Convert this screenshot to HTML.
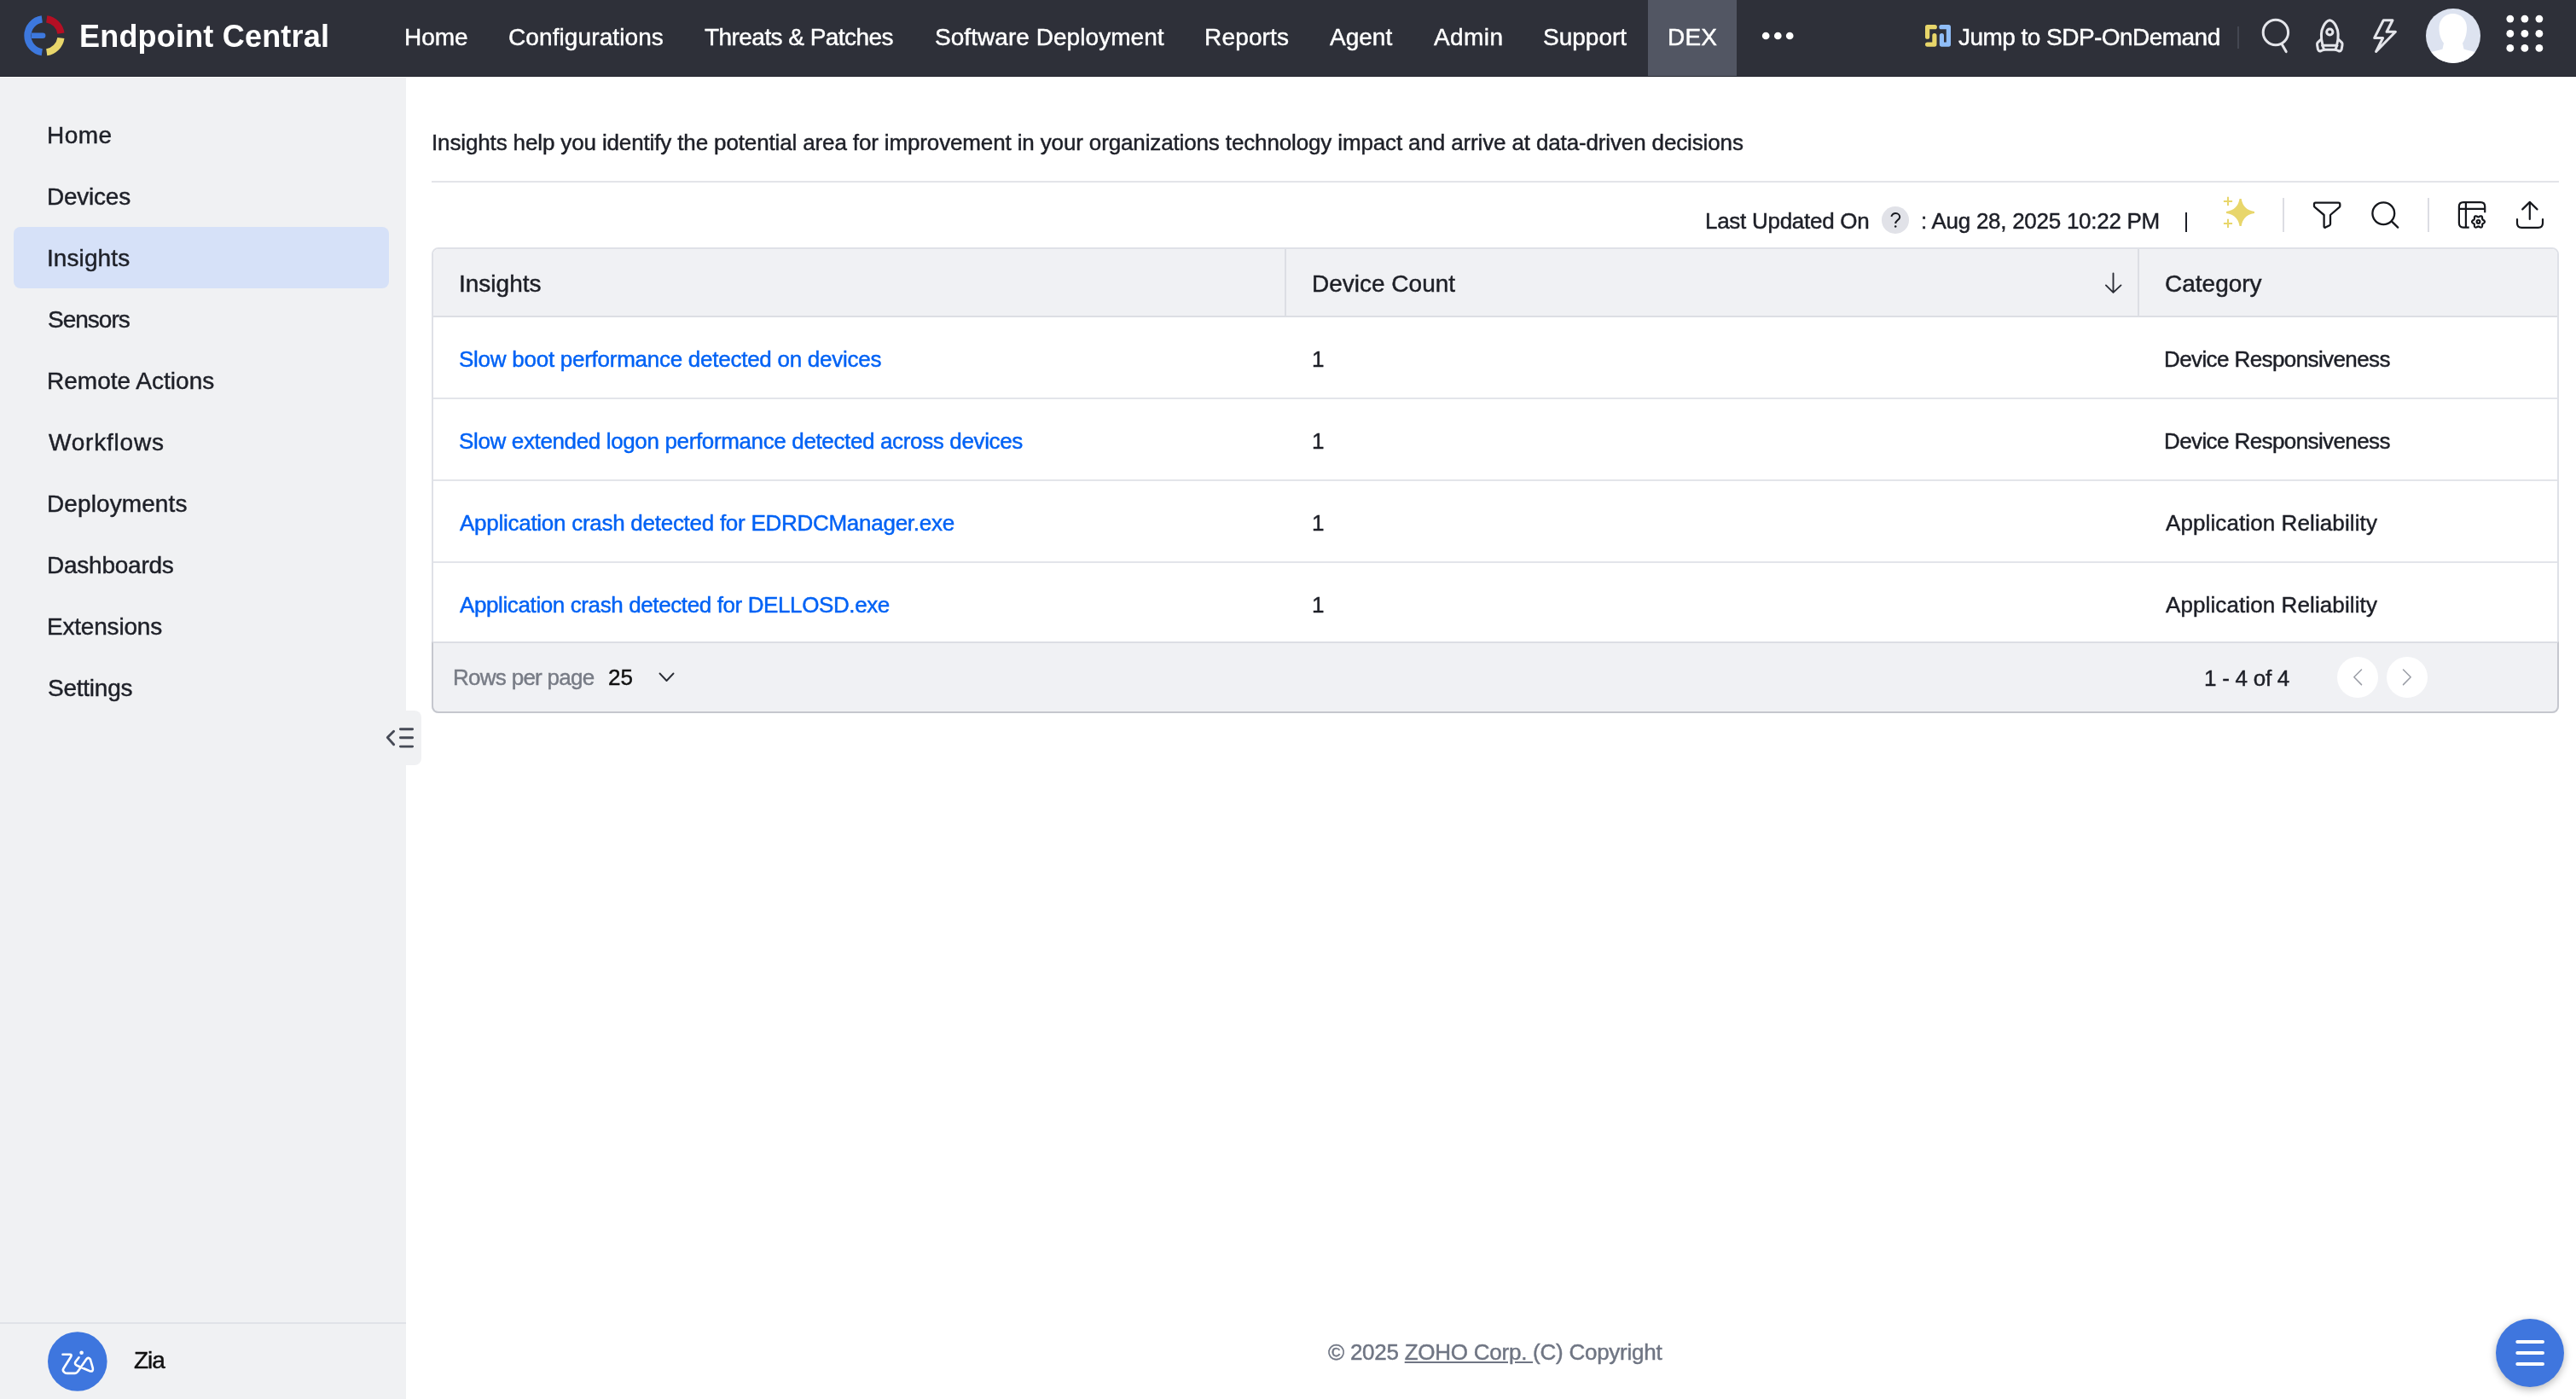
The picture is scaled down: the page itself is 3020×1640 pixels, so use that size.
<!DOCTYPE html>
<html><head><meta charset="utf-8">
<style>
*{box-sizing:border-box;margin:0;padding:0}
html,body{width:3020px;height:1640px;overflow:hidden;background:#fff;font-family:"Liberation Sans",sans-serif}
.a{position:absolute}
.t{position:absolute;white-space:nowrap;line-height:1;will-change:transform;-webkit-text-stroke:0.45px currentColor}
#hdr{left:0;top:0;width:3020px;height:89px;background:#2e3039;border-bottom:1px solid #24262f;box-sizing:content-box}
.nav{font-size:28px;color:#fff;top:30.2px}
#side{left:0;top:91px;width:476px;height:1549px;background:#f0f1f3}
.si{font-size:28px;color:#1e2028;left:54.3px}
.r26{font-size:26px;color:#1d1f27}
.lnk{font-size:26px;color:#0062f5}
</style></head><body>
<div id="hdr" class="a"></div>
<!-- logo -->
<svg class="a" style="left:0;top:0" width="100" height="90" viewBox="0 0 100 90">
  <g fill="none" stroke-width="8.2">
    <path d="M49.27 22.39 A19.6 19.6 0 0 0 49.27 61.21" stroke="#3d78de"/>
    <path d="M54.73 22.39 A19.6 19.6 0 0 1 71.41 39.07" stroke="#b50f24"/>
    <path d="M71.41 44.53 A19.6 19.6 0 0 1 54.73 61.21" stroke="#e8d66b"/>
  </g>
  <path d="M37 38.5 H50.1 A3.3 3.3 0 0 1 50.1 45.1 H37 Z" fill="#3d78de"/>
</svg>
<div class="t" style="left:93px;top:24.5px;font-size:36px;font-weight:bold;color:#fff;-webkit-text-stroke:0;letter-spacing:0.2px">Endpoint Central</div>
<div class="t nav" style="left:473.5px">Home</div>
<div class="t nav" style="left:596px;letter-spacing:0.1px">Configurations</div>
<div class="t nav" style="left:826px;letter-spacing:-0.55px">Threats &amp; Patches</div>
<div class="t nav" style="left:1095.5px;letter-spacing:0.05px">Software Deployment</div>
<div class="t nav" style="left:1412px;letter-spacing:0.17px">Reports</div>
<div class="t nav" style="left:1559px">Agent</div>
<div class="t nav" style="left:1681.2px;letter-spacing:0.4px">Admin</div>
<div class="t nav" style="left:1809px">Support</div>
<div class="a" style="left:1932px;top:0;width:104px;height:89px;background:#525663"></div>
<div class="t nav" style="left:1955px;letter-spacing:0.2px">DEX</div>
<svg class="a" style="left:2060px;top:32px" width="48" height="20" viewBox="2060 32 48 20"><circle cx="2070.2" cy="42" r="4.35" fill="#fff"/><circle cx="2084.3" cy="42" r="4.35" fill="#fff"/><circle cx="2098.2" cy="42" r="4.35" fill="#fff"/></svg>

<!-- right header -->
<svg class="a" style="left:2257px;top:29px" width="32" height="27" viewBox="0 0 32 27">
  <g fill="none" stroke-width="5.2" stroke-linecap="round" stroke-linejoin="round">
    <path d="M2.6 14.2 V2.7 H11.3" stroke="#e8d66a"/>
    <path d="M10.9 12.7 V23.1 H2.6" stroke="#e8d66a"/>
    <path d="M18.9 2.7 H27.4 V23.1 H19.4 V12.7" stroke="#8fbdf8"/>
  </g>
</svg>
<div class="t nav" style="left:2296px;letter-spacing:-0.54px">Jump to SDP-OnDemand</div>
<div class="a" style="left:2623px;top:31px;width:2px;height:26px;background:#444752"></div>
<svg class="a" style="left:2640px;top:10px" width="60" height="60" viewBox="2640 10 60 60">
  <g fill="none" stroke="#e4e5ea" stroke-width="3" stroke-linecap="round">
    <circle cx="2667.9" cy="38" r="14.7"/>
    <path d="M2675 51.5 L2680.2 60.6"/>
  </g>
</svg>
<svg class="a" style="left:2705px;top:15px" width="53" height="53" viewBox="0 0 53 53">
  <g fill="none" stroke="#e4e5ea" stroke-width="3" stroke-linecap="round" stroke-linejoin="round">
    <path d="M17.8 37 C16 30, 15.5 22, 19 15.5 C21 11.5, 24 9, 26.3 8.7 C28.6 9, 31.6 11.5, 33.6 15.5 C37 22, 36.6 30, 34.8 37"/>
    <path d="M17.8 38.3 H34.8"/>
    <path d="M19.7 43.2 H32.9"/>
    <path d="M15.6 31.6 L12.2 34.8 Q11.2 36 11.6 38 L12.5 43 Q13.5 45.5 16 44.7 L19.7 43.2 L17.8 38.3"/>
    <path d="M37 31.6 L40.4 34.8 Q41.4 36 41 38 L40.1 43 Q39.1 45.5 36.6 44.7 L32.9 43.2 L34.8 38.3"/>
    <circle cx="26.3" cy="22.5" r="3.6"/>
  </g>
</svg>
<svg class="a" style="left:2772px;top:15px" width="50" height="53" viewBox="0 0 50 53">
  <path d="M22.3 8.7 H33 L26.1 22.3 H36.4 L13.6 45.5 L21.6 29.5 H11.7 Z" fill="none" stroke="#e4e5ea" stroke-width="3" stroke-linejoin="round"/>
</svg>
<svg class="a" style="left:2844px;top:10px" width="64" height="64" viewBox="0 0 64 64">
  <defs><clipPath id="av"><circle cx="32" cy="32" r="32"/></clipPath></defs>
  <g clip-path="url(#av)">
    <rect width="64" height="64" fill="#dde3f0"/>
    <path d="M31.7 5.9 C40.5 5.9, 48 12.5, 48 22.5 C48 30, 46 36.5, 43 40.5 L44.5 47.5 Q52 50, 66 52.5 V66 H-2 V52.5 Q12 50, 19.5 47.5 L21 40.5 C17.5 36.5, 15.5 30, 15.5 22.5 C15.5 12.5, 23 5.9, 31.7 5.9 Z" fill="#fff"/>
  </g>
</svg>
<svg class="a" style="left:2930px;top:10px" width="60" height="60" viewBox="2930 10 60 60" fill="#fff">
  <circle cx="2942.8" cy="22.1" r="4.4"/><circle cx="2959.9" cy="22.1" r="4.4"/><circle cx="2976.9" cy="22.1" r="4.4"/>
  <circle cx="2942.8" cy="39.4" r="4.4"/><circle cx="2959.9" cy="39.4" r="4.4"/><circle cx="2976.9" cy="39.4" r="4.4"/>
  <circle cx="2942.8" cy="56.4" r="4.4"/><circle cx="2959.9" cy="56.4" r="4.4"/><circle cx="2976.9" cy="56.4" r="4.4"/>
</svg>


<div id="side" class="a"></div>
<div class="a" style="left:16px;top:266px;width:440px;height:72px;border-radius:8px;background:#d6e1f8"></div>
<div class="t si" style="top:144.8px;left:54.9px;letter-spacing:0.45px">Home</div>
<div class="t si" style="top:216.8px;left:54.9px;letter-spacing:-0.23px">Devices</div>
<div class="t si" style="top:288.8px;left:55.3px;letter-spacing:0.09px">Insights</div>
<div class="t si" style="top:360.8px;left:55.9px;letter-spacing:-1px">Sensors</div>
<div class="t si" style="top:432.8px;left:54.9px;letter-spacing:0.01px">Remote Actions</div>
<div class="t si" style="top:504.8px;left:56.9px;letter-spacing:0.8px">Workflows</div>
<div class="t si" style="top:576.8px;left:54.9px;letter-spacing:0.1px">Deployments</div>
<div class="t si" style="top:648.8px;left:54.9px;letter-spacing:-0.24px">Dashboards</div>
<div class="t si" style="top:720.8px;left:54.9px;letter-spacing:-0.2px">Extensions</div>
<div class="t si" style="top:792.8px;left:55.9px;letter-spacing:-0.24px">Settings</div>

<!-- main -->
<div class="t r26" style="left:505.6px;top:154px;letter-spacing:-0.137px">Insights help you identify the potential area for improvement in your organizations technology impact and arrive at data-driven decisions</div>
<div class="a" style="left:506px;top:212px;width:2494px;height:2px;background:#e3e4e9"></div>

<div class="a" style="left:476px;top:833px;width:18px;height:64px;border-radius:0 8px 8px 0;background:#f0f1f3"></div>
<svg class="a" style="left:445px;top:845px" width="50" height="40" viewBox="445 845 50 40">
  <g fill="none" stroke="#464a56" stroke-width="2.9" stroke-linecap="round" stroke-linejoin="round">
    <path d="M461.6 857.2 L454.3 864.6 L461.6 872.8"/>
    <path d="M469.4 854.7 H483.6 M469.4 864.8 H483.6 M469.4 875.1 H483.6"/>
  </g>
</svg>
<div class="a" style="left:0;top:1550px;width:476px;height:2px;background:#e0e2e8"></div>
<svg class="a" style="left:56px;top:1561px" width="70" height="70" viewBox="0 0 70 70">
  <circle cx="34.8" cy="35" r="34.8" fill="#3e76de"/>
  <g fill="none" stroke="#fff" stroke-width="2.6" stroke-linecap="round" stroke-linejoin="round">
    <path d="M17.5 26.8 H26 Q28.5 26.8 27.2 29.3 L18.3 43.5 Q16.8 46.2 20 48.2 Q21 48.9 23 48.9 H31.5 Q34 48.9 35.5 46.4 L45.3 32.3 Q47.5 29.6 49.5 32 Q50.2 33 50.5 34.5 L52.8 42.8 Q53.6 47.4 49.3 46.3 L34.2 39.7 Q30.8 38.2 32.6 35.3 L36.5 30.3"/>
  </g>
  <circle cx="39.6" cy="24.7" r="2.3" fill="#fff"/>
</svg>
<div class="t" style="left:157px;top:1580.7px;font-size:28px;color:#111;letter-spacing:-1px">Zia</div>

<!-- toolbar -->
<div class="t r26" style="left:1999.2px;top:246px;letter-spacing:-0.28px">Last Updated On</div>
<div class="a" style="left:2206px;top:242.2px;width:31.6px;height:31.6px;border-radius:50%;background:#e1e2e8"></div>
<svg class="a" style="left:2206px;top:242px" width="32" height="32" viewBox="2206 242 32 32"><path d="M2217.3 253.9 C2218.4 251.3, 2220.3 250.1, 2222.4 250.1 C2225.2 250.1, 2227.2 252.1, 2227.2 254.5 C2227.2 257.6, 2222.2 258.6, 2222.2 261.9" fill="none" stroke="#17191f" stroke-width="2" stroke-linecap="butt"/><circle cx="2222.2" cy="265.4" r="1.25" fill="#17191f"/></svg>
<div class="t r26" style="left:2252px;top:246px;letter-spacing:-0.27px">: Aug 28, 2025 10:22 PM</div>
<div class="a" style="left:2561.5px;top:248.5px;width:2px;height:23px;background:#1d1f27"></div>
<svg class="a" style="left:2600px;top:225px" width="50" height="50" viewBox="2600 225 50 50">
  <path d="M2625.50 233.00 L2627.70 233.00 Q2629.60 246.00 2643.00 248.00 L2643.00 250.00 Q2629.60 252.00 2627.70 265.00 L2625.50 265.00 Q2623.60 252.00 2610.00 250.00 L2610.00 248.00 Q2623.60 246.00 2625.50 233.00 Z" fill="#e8d66b"/>
  <g stroke="#e8d66b" stroke-width="2">
    <path d="M2606.9 235.9 H2617.1 M2612 230.8 V241"/>
    <path d="M2606.9 261.9 H2617.1 M2612 256.8 V267"/>
  </g>
</svg>
<div class="a" style="left:2676px;top:232px;width:2px;height:39.5px;background:#dcdde3"></div>
<svg class="a" style="left:2700px;top:225px" width="130" height="50" viewBox="2700 225 130 50">
  <g fill="none" stroke="#15171c" stroke-width="2.3" stroke-linejoin="round" stroke-linecap="round">
    <path d="M2714.5 237.7 H2741.5 Q2743.3 237.7 2743.3 239.5 V241.6 Q2743.3 242.3 2742.6 242.9 L2732 252 V262.5 Q2732 263.6 2731 264.2 L2726.3 266.6 Q2724.6 267.2 2724.6 265.5 V252 L2713.8 242.9 Q2713 242.3 2713 241.6 V239.5 Q2713 237.7 2714.5 237.7 Z"/>
    <circle cx="2794.3" cy="250.2" r="12.9"/>
    <path d="M2804.3 259.9 L2811.2 266.6"/>
  </g>
</svg>
<div class="a" style="left:2846px;top:232px;width:2px;height:39.5px;background:#dcdde3"></div>
<svg class="a" style="left:2870px;top:225px" width="130" height="50" viewBox="2870 225 130 50">
  <g fill="none" stroke="#15171c" stroke-width="2.2" stroke-linecap="butt" stroke-linejoin="round">
    <path d="M2913.2 249.2 V242.1 Q2913.2 237.1 2908.2 237.1 H2887.9 Q2882.9 237.1 2882.9 242.1 V261.6 Q2882.9 266.6 2887.9 266.6 H2894.7"/>
    <path d="M2882.9 244.9 H2913.2 M2890.9 237.1 V266.6"/>
    <path d="M2912.95 259.90 L2912.89 260.29 L2912.73 260.66 L2912.47 261.00 L2912.15 261.31 L2911.78 261.58 L2911.40 261.82 L2911.05 262.03 L2910.74 262.23 L2910.49 262.44 L2910.31 262.67 L2910.19 262.95 L2910.14 263.27 L2910.12 263.64 L2910.11 264.05 L2910.10 264.50 L2910.05 264.95 L2909.94 265.39 L2909.77 265.78 L2909.53 266.11 L2909.22 266.35 L2908.86 266.50 L2908.46 266.54 L2908.03 266.49 L2907.60 266.36 L2907.18 266.18 L2906.79 265.97 L2906.43 265.77 L2906.10 265.60 L2905.79 265.49 L2905.50 265.45 L2905.21 265.49 L2904.90 265.60 L2904.57 265.77 L2904.21 265.97 L2903.82 266.18 L2903.40 266.36 L2902.97 266.49 L2902.54 266.54 L2902.14 266.50 L2901.78 266.35 L2901.47 266.11 L2901.23 265.78 L2901.06 265.39 L2900.95 264.95 L2900.90 264.50 L2900.89 264.05 L2900.88 263.64 L2900.86 263.27 L2900.81 262.95 L2900.69 262.67 L2900.51 262.44 L2900.26 262.23 L2899.95 262.03 L2899.60 261.82 L2899.22 261.58 L2898.85 261.31 L2898.53 261.00 L2898.27 260.66 L2898.11 260.29 L2898.05 259.90 L2898.11 259.51 L2898.27 259.14 L2898.53 258.80 L2898.85 258.49 L2899.22 258.22 L2899.60 257.98 L2899.95 257.77 L2900.26 257.57 L2900.51 257.36 L2900.69 257.12 L2900.81 256.85 L2900.86 256.53 L2900.88 256.16 L2900.89 255.75 L2900.90 255.30 L2900.95 254.85 L2901.06 254.41 L2901.23 254.02 L2901.47 253.69 L2901.78 253.45 L2902.14 253.30 L2902.54 253.26 L2902.97 253.31 L2903.40 253.44 L2903.82 253.62 L2904.21 253.83 L2904.57 254.03 L2904.90 254.20 L2905.21 254.31 L2905.50 254.35 L2905.79 254.31 L2906.10 254.20 L2906.43 254.03 L2906.79 253.83 L2907.18 253.62 L2907.60 253.44 L2908.03 253.31 L2908.46 253.26 L2908.86 253.30 L2909.22 253.45 L2909.53 253.69 L2909.77 254.02 L2909.94 254.41 L2910.05 254.85 L2910.10 255.30 L2910.11 255.75 L2910.12 256.16 L2910.14 256.53 L2910.19 256.85 L2910.31 257.12 L2910.49 257.36 L2910.74 257.57 L2911.05 257.77 L2911.40 257.98 L2911.78 258.22 L2912.15 258.49 L2912.47 258.80 L2912.73 259.14 L2912.89 259.51 Z"/>
    <circle cx="2905.5" cy="259.9" r="1.9"/>
  </g>
  <g fill="none" stroke="#15171c" stroke-width="2.2" stroke-linecap="round" stroke-linejoin="round">
    <path d="M2965.8 237.6 V257"/>
    <path d="M2957.2 245.4 L2965.8 236.9 L2974.5 245.4"/>
    <path d="M2951 257 V261.5 Q2951 266.8 2956.3 266.8 H2975.7 Q2981 266.8 2981 261.5 V257"/>
  </g>
</svg>

<!-- table -->
<div class="a" style="left:506px;top:289.6px;width:2493.6px;height:546px;border:2px solid #dfe1e7;border-radius:8px;background:#fff"></div>
<div class="a" style="left:508px;top:291.6px;width:2489.6px;height:78.4px;background:#f0f1f4;border-radius:6px 6px 0 0"></div>
<div class="a" style="left:508px;top:370px;width:2489.6px;height:2px;background:#dcdee4"></div>
<div class="a" style="left:1506px;top:291.6px;width:2px;height:78.4px;background:#dcdee4"></div>
<div class="a" style="left:2506px;top:291.6px;width:2px;height:78.4px;background:#dcdee4"></div>
<div class="a" style="left:508px;top:465.7px;width:2489.6px;height:2px;background:#e3e5ea"></div>
<div class="a" style="left:508px;top:561.7px;width:2489.6px;height:2px;background:#e3e5ea"></div>
<div class="a" style="left:508px;top:657.7px;width:2489.6px;height:2px;background:#e3e5ea"></div>
<div class="a" style="left:506px;top:752px;width:2493.6px;height:83.6px;background:#f0f1f4;border:2px solid #c5c7ce;border-top-color:#dcdee4;border-radius:0 0 8px 8px"></div>
<div class="t" style="left:538px;top:319.3px;font-size:28px;color:#1d1f26">Insights</div>
<div class="t" style="left:1538px;top:319.3px;font-size:28px;color:#1d1f26">Device Count</div>
<div class="t" style="left:2538px;top:319.3px;font-size:28px;color:#1d1f26">Category</div>
<svg class="a" style="left:2460px;top:315px" width="40" height="35" viewBox="2460 315 40 35">
  <g fill="none" stroke="#2b2e36" stroke-width="1.9" stroke-linecap="round" stroke-linejoin="round">
    <path d="M2477.5 320.5 V342.6 M2468.9 334.4 L2477.5 342.9 L2486.5 334.4"/>
  </g>
</svg>
<div class="t lnk" style="left:537px;top:407.5px;left:537.5px;letter-spacing:-0.26px">Slow boot performance detected on devices</div>
<div class="t lnk" style="left:537px;top:504px;left:537.5px;letter-spacing:-0.36px">Slow extended logon performance detected across devices</div>
<div class="t lnk" style="left:537px;top:600px;left:538.5px;letter-spacing:-0.27px">Application crash detected for EDRDCManager.exe</div>
<div class="t lnk" style="left:537px;top:696px;left:538.5px;letter-spacing:-0.39px">Application crash detected for DELLOSD.exe</div>
<div class="t r26" style="left:1538px;top:407.5px">1</div>
<div class="t r26" style="left:1538px;top:504px">1</div>
<div class="t r26" style="left:1538px;top:600px">1</div>
<div class="t r26" style="left:1538px;top:696px">1</div>
<div class="t r26" style="left:2537px;top:407.5px;letter-spacing:-0.6px">Device Responsiveness</div>
<div class="t r26" style="left:2537px;top:504px;letter-spacing:-0.6px">Device Responsiveness</div>
<div class="t r26" style="left:2537px;top:600px;left:2538.5px;letter-spacing:0.1px">Application Reliability</div>
<div class="t r26" style="left:2537px;top:696px;left:2538.5px;letter-spacing:0.1px">Application Reliability</div>
<div class="t" style="left:531px;top:781px;font-size:26px;color:#777b85;letter-spacing:-0.72px">Rows per page</div>
<div class="t" style="left:713px;top:781px;font-size:26px;color:#111">25</div>
<svg class="a" style="left:765px;top:780px" width="30" height="25" viewBox="765 780 30 25">
  <path d="M773.5 789.5 L781.5 798 L789.5 789.5" fill="none" stroke="#2b2e36" stroke-width="1.9" stroke-linecap="round" stroke-linejoin="round"/>
</svg>
<div class="t r26" style="left:2584px;top:782px;letter-spacing:-0.26px">1 - 4 of 4</div>
<div class="a" style="left:2740px;top:769.7px;width:48px;height:48px;border-radius:50%;background:#fff"></div>
<div class="a" style="left:2798px;top:769.7px;width:48px;height:48px;border-radius:50%;background:#fff"></div>
<svg class="a" style="left:2740px;top:770px" width="110" height="48" viewBox="2740 770 110 48">
  <g fill="none" stroke="#9a9da6" stroke-width="1.5" stroke-linecap="round" stroke-linejoin="round">
    <path d="M2768.5 785 L2759.8 793.8 L2768.5 802.6"/>
    <path d="M2817.5 785 L2826.2 793.8 L2817.5 802.6"/>
  </g>
</svg>

<!-- footer -->
<div class="t" style="left:1557px;top:1571.5px;font-size:26px;color:#6f7583;letter-spacing:-0.25px">&copy; 2025 <span style="text-decoration:underline">ZOHO Corp. </span>(C) Copyright</div>
<div class="a" style="left:2926px;top:1546px;width:80px;height:80px;border-radius:50%;background:#3f76de;box-shadow:0 3px 10px rgba(0,0,0,0.28)"></div>
<svg class="a" style="left:2926px;top:1546px" width="80" height="80" viewBox="2926 1546 80 80">
  <g stroke="#fff" stroke-width="4" stroke-linecap="round">
    <path d="M2951.3 1572.9 H2981 M2951.3 1586 H2981 M2951.3 1598.9 H2981"/>
  </g>
</svg>
</body></html>
